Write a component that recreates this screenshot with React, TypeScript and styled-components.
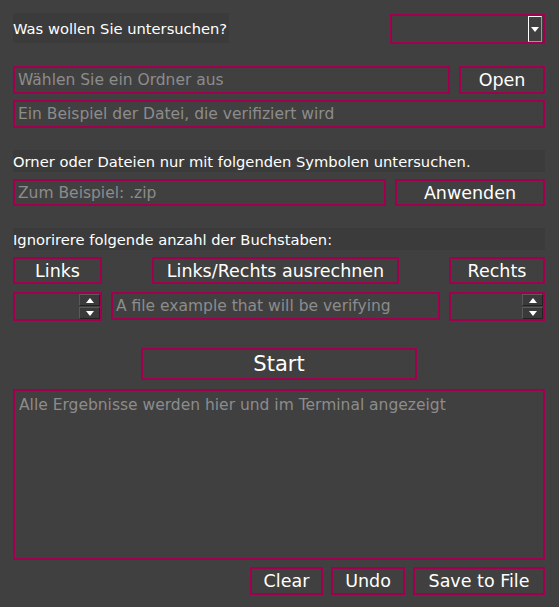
import styled, { createGlobalStyle } from "styled-components";

const GlobalStyle = createGlobalStyle`
    html, body {
        margin: 0;
        padding: 0;
        background: #404040;
    }
    * {
        box-sizing: border-box;
    }
`

const accent = "#a0004d";

const Window = styled.div`
    width: 559px;
    height: 607px;
    background: #404040;
    padding: 13px 14px 0 13px;
    font-family: "DejaVu Sans", "Liberation Sans", sans-serif;
    color: #ffffff;
    display: flex;
    flex-direction: column;
`

const Row = styled.div<{ $top?: number; $gap?: number; $justify?: string }>`
    display: flex;
    align-items: stretch;
    gap: ${p => p.$gap ?? 9}px;
    margin-top: ${p => p.$top ?? 0}px;
    justify-content: ${p => p.$justify ?? "flex-start"};
`

const Label = styled.div<{ $width?: string; $height?: number }>`
    width: ${p => p.$width ?? "100%"};
    height: ${p => p.$height ?? 22}px;
    background: #3b3b3b;
    font-size: 14.7px;
    display: flex;
    align-items: center;
    white-space: nowrap;
`

const Field = styled.div<{ $grow?: boolean; $height?: number }>`
    flex: ${p => (p.$grow ? "1 1 0" : "none")};
    height: ${p => p.$height ?? 28}px;
    border: 2px solid ${accent};
    background: #404040;
    color: #8c8c8c;
    font-size: 15.5px;
    padding: 0 0 0 3px;
    display: flex;
    align-items: center;
    white-space: nowrap;
    overflow: hidden;
`

const Button = styled.div<{ $width: number; $height?: number; $size?: number }>`
    flex: none;
    width: ${p => p.$width}px;
    height: ${p => p.$height ?? 28}px;
    border: 2px solid ${accent};
    color: #ffffff;
    font-size: ${p => p.$size ?? 17.5}px;
    display: flex;
    align-items: center;
    justify-content: center;
    white-space: nowrap;
`

const Combo = styled.div`
    width: 155px;
    height: 30px;
    margin-top: 1px;
    border: 2px solid ${accent};
    display: flex;
    justify-content: flex-end;
    padding: 0 1px 0 0;
`

const ComboArrow = styled.div`
    width: 14px;
    height: 26px;
    border: 1px solid #9a9a9a;
    border-left-color: #ffffff;
    border-top-color: #ffffff;
    display: flex;
    align-items: center;
    justify-content: center;
`

const Spin = styled.div<{ $width: number }>`
    flex: none;
    width: ${p => p.$width}px;
    height: 29px;
    border: 2px solid ${accent};
    display: flex;
    justify-content: flex-end;
`

const SpinButtons = styled.div`
    width: 21px;
    display: flex;
    flex-direction: column;
    gap: 1px;
`

const SpinButton = styled.div`
    flex: 1;
    background: #3a3a3a;
    border-top: 1px solid #5a5a5a;
    border-left: 1px solid #5a5a5a;
    border-right: 1px solid #222;
    border-bottom: 1px solid #222;
    display: flex;
    align-items: center;
    justify-content: center;
`

const Output = styled.div`
    height: 171px;
    margin-top: 9px;
    border: 2px solid ${accent};
    color: #8c8c8c;
    font-size: 15.5px;
    padding: 5px 4px;
`

const Triangle = ({up}: { up?: boolean }) => (
    <svg width="8" height="5" viewBox="0 0 8 5">
        <polygon points={up ? "0,5 8,5 4,0" : "0,0 8,0 4,5"} fill="#ffffff"/>
    </svg>
)

const App = () => {
    return (
        <Window>
            <GlobalStyle/>
            <Row $justify="space-between">
                <Label $width="216px" $height={30}>Was wollen Sie untersuchen?</Label>
                <Combo>
                    <ComboArrow><Triangle/></ComboArrow>
                </Combo>
            </Row>

            <Row $top={22}>
                <Field $grow>Wählen Sie ein Ordner aus</Field>
                <Button $width={86}>Open</Button>
            </Row>
            <Row $top={6}>
                <Field $grow>Ein Beispiel der Datei, die verifiziert wird</Field>
            </Row>

            <Row $top={22}>
                <Label>Orner oder Dateien nur mit folgenden Symbolen untersuchen.</Label>
            </Row>
            <Row $top={7}>
                <Field $grow $height={27}>Zum Beispiel: .zip</Field>
                <Button $width={150} $height={27}>Anwenden</Button>
            </Row>

            <Row $top={22}>
                <Label>Ignorirere folgende anzahl der Buchstaben:</Label>
            </Row>
            <Row $top={7} $justify="space-between">
                <Button $width={89} $height={27}>Links</Button>
                <Button $width={247} $height={27}>Links/Rechts ausrechnen</Button>
                <Button $width={96} $height={27}>Rechts</Button>
            </Row>
            <Row $top={8}>
                <Spin $width={89}>
                    <SpinButtons>
                        <SpinButton><Triangle up/></SpinButton>
                        <SpinButton><Triangle/></SpinButton>
                    </SpinButtons>
                </Spin>
                <Field $grow $height={28}>A file example that will be verifying</Field>
                <Spin $width={96}>
                    <SpinButtons>
                        <SpinButton><Triangle up/></SpinButton>
                        <SpinButton><Triangle/></SpinButton>
                    </SpinButtons>
                </Spin>
            </Row>

            <Row $top={27} $justify="center">
                <Button $width={276} $height={32} $size={21}>Start</Button>
            </Row>
            <Output>Alle Ergebnisse werden hier und im Terminal angezeigt</Output>
            <Row $top={7} $gap={8} $justify="flex-end">
                <Button $width={73}>Clear</Button>
                <Button $width={74}>Undo</Button>
                <Button $width={132}>Save to File</Button>
            </Row>
        </Window>
    );
};

export default App;
